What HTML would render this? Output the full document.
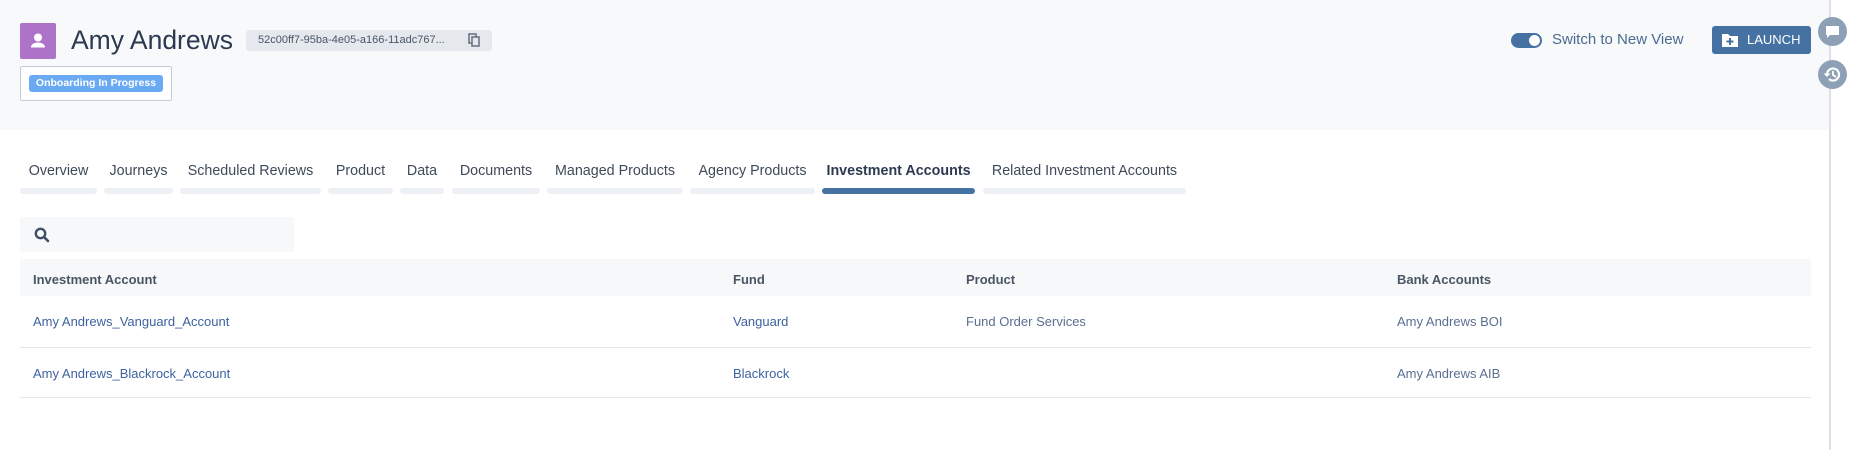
<!DOCTYPE html>
<html><head><meta charset="utf-8"><style>
*{box-sizing:border-box;margin:0;padding:0}
body{width:1849px;height:450px;background:#fff;font-family:"Liberation Sans",sans-serif;position:relative;overflow:hidden;color:#3a4a5c}
.hdr{position:absolute;left:0;top:0;width:1830px;height:130px;background:#f8f9fb}
.abs{position:absolute}
.tab{position:absolute;top:163px;font-size:14.3px;color:#3e4a5a;text-align:center;white-space:nowrap}
.bar{position:absolute;top:188px;height:6px;border-radius:3px;background:#edf1f5}
.th{position:absolute;top:272px;font-size:13px;font-weight:bold;color:#4a5566}
.td{position:absolute;font-size:13px;color:#3e62a0}
</style></head><body>
<div class="hdr"></div>
<div class="abs" style="left:20px;top:23px;width:36px;height:36px;background:#ac73c8;border-radius:2px">
<svg width="36" height="36" viewBox="0 0 36 36"><circle cx="18" cy="14.5" r="4" fill="#fff"/><path d="M11 24.5c0-3.5 3.5-5 7-5s7 1.5 7 5z" fill="#fff"/></svg></div>
<div class="abs" style="left:71px;top:25px;font-size:26.5px;color:#2c3a50">Amy Andrews</div>
<div class="abs" style="left:246px;top:30px;width:246px;height:21px;background:#e5e8ed;border-radius:3px;font-size:11px;color:#4a5566;padding:4px 0 0 12px">52c00ff7-95ba-4e05-a166-11adc767...</div>
<svg class="abs" style="left:468px;top:33px" width="14" height="15" viewBox="0 0 14 15"><rect x="1" y="1" width="7" height="9" fill="none" stroke="#6b7585" stroke-width="1.6"/><rect x="4" y="4" width="7" height="9" fill="#e5e8ed" stroke="#6b7585" stroke-width="1.6"/></svg>
<div class="abs" style="left:20px;top:66px;width:152px;height:35px;border:1px solid #c5ccd6;border-radius:2px;background:#fff"></div>
<div class="abs" style="left:29px;top:75px;width:134px;height:17px;background:#6aaaf5;border-radius:3px;color:#fff;font-size:10.5px;font-weight:bold;text-align:center;line-height:17px">Onboarding In Progress</div>
<div class="abs" style="left:1511px;top:33px;width:31px;height:15px;border-radius:8px;background:#4571a3"><div style="position:absolute;right:2px;top:2px;width:11px;height:11px;border-radius:50%;background:#fff"></div></div>
<div class="abs" style="left:1552px;top:31px;font-size:15px;color:#4a6a90">Switch to New View</div>
<div class="abs" style="left:1712px;top:26px;width:99px;height:28px;background:#4571a3;border-radius:3px;color:#fff;font-size:13px;line-height:28px;padding-left:35px">LAUNCH</div>
<svg class="abs" style="left:1722px;top:33px" width="16" height="14" viewBox="0 0 16 14"><path d="M0 1h6l2 2h8v11H0z" fill="#fff"/><path d="M8 5v7M4.5 8.5h7" stroke="#4571a3" stroke-width="2"/></svg>
<div class="abs" style="left:1829px;top:0;width:2px;height:450px;background:#dde1e7"></div>
<div class="abs" style="left:1818px;top:17px;width:29px;height:29px;border-radius:50%;background:#8ea0b6"></div>
<svg class="abs" style="left:1825px;top:25px" width="15" height="14" viewBox="0 0 15 14"><path d="M1 1h13v9H5l-3 3V10H1z" fill="#fff"/></svg>
<div class="abs" style="left:1818px;top:60px;width:29px;height:29px;border-radius:50%;background:#8ea0b6"></div>
<svg class="abs" style="left:1822px;top:64px" width="21" height="21" viewBox="0 0 21 21"><path d="M5 10.5a6 6 0 1 1 2 4.5" fill="none" stroke="#fff" stroke-width="2.2"/><path d="M1.5 9.5h7L5 13z" fill="#fff"/><path d="M11 7v4l3 2" fill="none" stroke="#fff" stroke-width="1.8"/></svg>

<div class="tab" style="left:20px;width:77px">Overview</div><div class="bar" style="left:20px;width:77px"></div>
<div class="tab" style="left:104px;width:69px">Journeys</div><div class="bar" style="left:104px;width:69px"></div>
<div class="tab" style="left:180px;width:141px">Scheduled Reviews</div><div class="bar" style="left:180px;width:141px"></div>
<div class="tab" style="left:328px;width:65px">Product</div><div class="bar" style="left:328px;width:65px"></div>
<div class="tab" style="left:400px;width:44px">Data</div><div class="bar" style="left:400px;width:44px"></div>
<div class="tab" style="left:452px;width:88px">Documents</div><div class="bar" style="left:452px;width:88px"></div>
<div class="tab" style="left:547px;width:136px">Managed Products</div><div class="bar" style="left:547px;width:136px"></div>
<div class="tab" style="left:690px;width:125px">Agency Products</div><div class="bar" style="left:690px;width:125px"></div>
<div class="tab" style="left:822px;width:153px;font-weight:bold;color:#2c3a50">Investment Accounts</div><div class="bar" style="left:822px;width:153px;background:#4571a3"></div>
<div class="tab" style="left:983px;width:203px">Related Investment Accounts</div><div class="bar" style="left:983px;width:203px"></div>

<div class="abs" style="left:20px;top:217px;width:274px;height:35px;background:#f7f8fa;border-radius:3px"></div>
<svg class="abs" style="left:34px;top:227px" width="16" height="16" viewBox="0 0 16 16"><circle cx="6.5" cy="6.5" r="4.7" fill="none" stroke="#3e4e66" stroke-width="2.4"/><path d="M10 10l4 4" stroke="#3e4e66" stroke-width="2.6" stroke-linecap="round"/></svg>
<div class="abs" style="left:20px;top:259px;width:1791px;height:37px;background:#f7f8fa"></div>
<div class="th" style="left:33px">Investment Account</div>
<div class="th" style="left:733px">Fund</div>
<div class="th" style="left:966px">Product</div>
<div class="th" style="left:1397px">Bank Accounts</div>
<div class="td" style="left:33px;top:314px">Amy Andrews_Vanguard_Account</div>
<div class="td" style="left:733px;top:314px">Vanguard</div>
<div class="td" style="left:966px;top:314px;color:#5a6f90">Fund Order Services</div>
<div class="td" style="left:1397px;top:314px;color:#5a6f90">Amy Andrews BOI</div>
<div class="abs" style="left:20px;top:347px;width:1791px;height:1px;background:#e3e6ea"></div>
<div class="td" style="left:33px;top:366px">Amy Andrews_Blackrock_Account</div>
<div class="td" style="left:733px;top:366px">Blackrock</div>
<div class="td" style="left:1397px;top:366px;color:#5a6f90">Amy Andrews AIB</div>
<div class="abs" style="left:20px;top:397px;width:1791px;height:1px;background:#e3e6ea"></div>
</body></html>
